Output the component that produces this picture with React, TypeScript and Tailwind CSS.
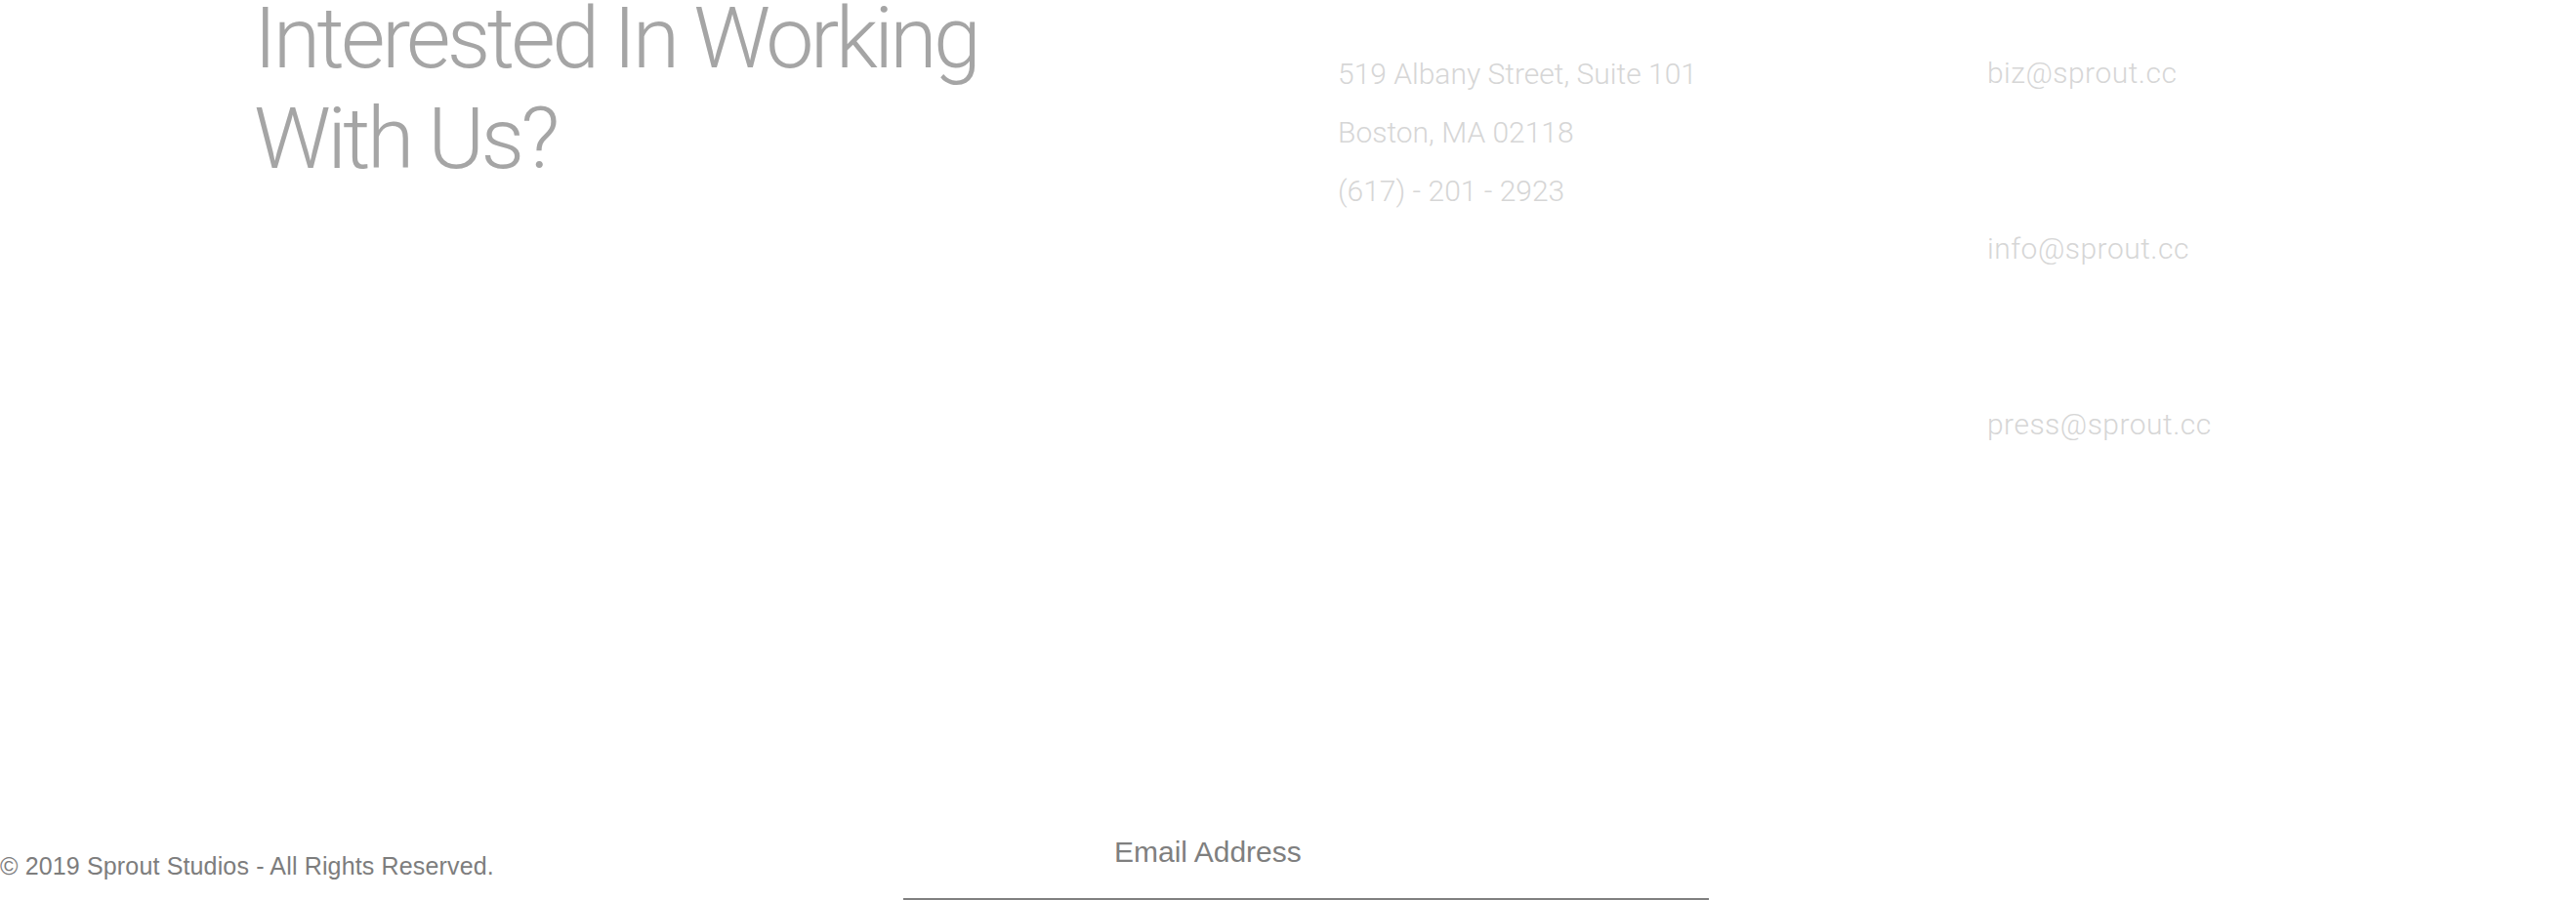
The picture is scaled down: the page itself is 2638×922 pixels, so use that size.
export default function App() {
  const emails = ["biz@sprout.cc", "info@sprout.cc", "press@sprout.cc"];

  return (
    <div className="w-full h-[922px] overflow-hidden bg-white flex flex-col justify-between font-['Liberation_Sans',Arial,sans-serif]">
      {/* Top: heading + contact info */}
      <div className="flex items-start pl-[260px]">
        <h2 className="w-[1110px] -mt-[13px] font-['Roboto',sans-serif] font-light text-[88px] leading-[103px] tracking-[-0.042em] text-[#a5a5a5]">
          Interested In Working
          <br />
          With Us?
        </h2>

        <div className="w-[665px] mt-[46px] flex flex-col font-['Roboto',sans-serif] font-light text-[30px] leading-[60px] text-[#d6d6d6]">
          <span>519 Albany Street, Suite 101</span>
          <span>Boston, MA 02118</span>
          <span>(617) - 201 - 2923</span>
        </div>

        <div className="mt-[45px] flex flex-col gap-[120px] font-['Roboto',sans-serif] font-light text-[30px] leading-[60px] tracking-[0.016em] text-[#d6d6d6]">
          {emails.map((email) => (
            <a key={email} href={`mailto:${email}`}>
              {email}
            </a>
          ))}
        </div>
      </div>

      {/* Bottom: copyright + newsletter */}
      <div className="grid grid-cols-[925px_825px_1fr] items-end">
        <p className="pb-[20px] text-[25px] leading-[30px] tracking-[0.006em] text-[#7d7d7d]">
          © 2019 Sprout Studios - All Rights Reserved.
        </p>
        <input
          type="email"
          placeholder="Email Address"
          className="w-[825px] pl-[216px] pt-0 pb-[30px] text-[30px] leading-[34px] text-[#7f7f7f] placeholder:text-[#7f7f7f] border-b-2 border-[#808080] outline-none bg-transparent"
        />
      </div>
    </div>
  );
}
